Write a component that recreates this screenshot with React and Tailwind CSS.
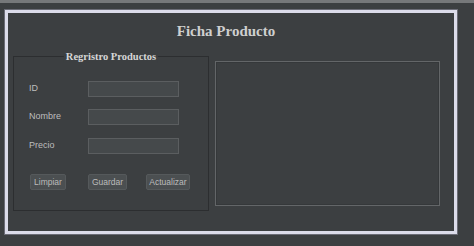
export default function App() {
  const campos = [
    { label: "ID", mt: "mt-[24px]" },
    { label: "Nombre", mt: "mt-[12px]" },
    { label: "Precio", mt: "mt-[13px]" },
  ];

  return (
    <div className="w-[474px] h-[246px] bg-[#3c3f41] overflow-hidden font-['Liberation_Sans',sans-serif]">
      {/* barra superior */}
      <div className="h-[3px] bg-[#76787a]" />

      <div className="pt-[7px] pl-[5px]">
        {/* marco principal */}
        <div className="w-[452px] h-[224px] border-[3px] border-[#dcdcea] bg-[#3c3f41] shadow-[0_0_0_1px_#6b6c76]">
          <h1 className="mt-[9px] pr-[10px] text-center text-[15px] leading-[18px] font-bold text-[#cfcfcf] font-['Liberation_Serif',serif]">
            Ficha Producto
          </h1>

          <div className="flex items-start mt-[16px] ml-[5px]">
            {/* Registro */}
            <div className="relative w-[196px] h-[155px] border border-[#2c2e30]">
              <span className="absolute left-1/2 top-0 -translate-x-1/2 -translate-y-1/2 px-[2px] bg-[#3c3f41] whitespace-nowrap text-[10.5px] leading-[12px] font-bold text-[#d6d6d6] font-['Liberation_Serif',serif]">
                Regristro Productos
              </span>

              <div className="pl-[15px] flex flex-col">
                {campos.map((c) => (
                  <div key={c.label} className={`flex items-center ${c.mt}`}>
                    <span className="w-[59px] text-[9px] text-[#bdbdbd]">{c.label}</span>
                    <div className="w-[91px] h-[16px] border border-[#5b5e60] bg-[#45494b]" />
                  </div>
                ))}

                <div className="flex items-center mt-[20px] ml-[1px] text-[8.5px] text-[#bcbcbc]">
                  <div className="w-[36px] h-[16px] flex items-center justify-center bg-[#4b4f51] border border-[#55595b] rounded-[2px]">
                    Limpiar
                  </div>
                  <div className="ml-[22px] w-[39px] h-[16px] flex items-center justify-center bg-[#4b4f51] border border-[#55595b] rounded-[2px]">
                    Guardar
                  </div>
                  <div className="ml-[19px] w-[44px] h-[16px] flex items-center justify-center bg-[#4b4f51] border border-[#55595b] rounded-[2px]">
                    Actualizar
                  </div>
                </div>
              </div>
            </div>

            {/* panel derecho */}
            <div className="ml-[6px] mt-[5px] w-[225px] h-[145px] border border-[#636668] shadow-[inset_0_0_0_1px_#35383a]" />
          </div>
        </div>
      </div>
    </div>
  );
}
